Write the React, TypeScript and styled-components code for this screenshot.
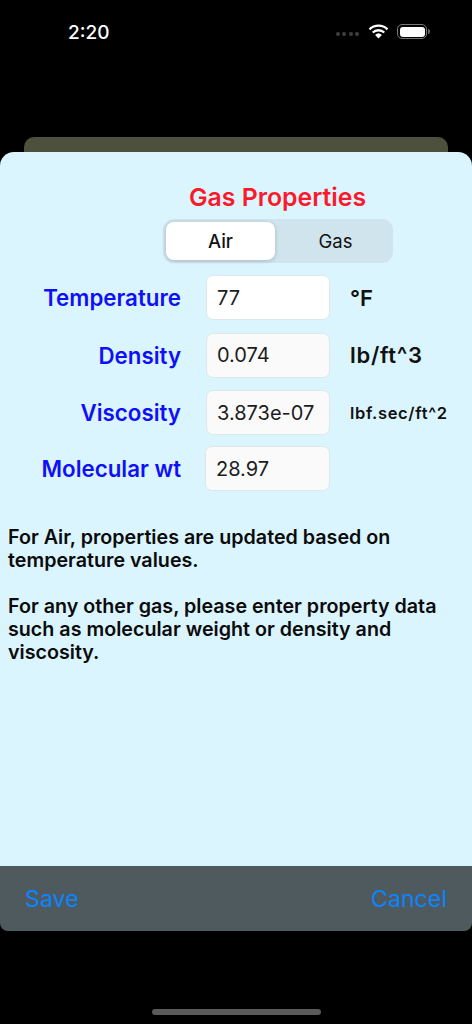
import React from "react";
import styled, { createGlobalStyle } from "styled-components";

const GlobalStyle = createGlobalStyle`
  html, body {
    margin: 0;
    padding: 0;
    background: #000;
  }
  body {
    font-family: Inter, "Liberation Sans", sans-serif;
  }
`;

const rows = [
  { label: "Temperature", value: "77", unit: "°F", active: true, size: 22 },
  { label: "Density", value: "0.074", unit: "lb/ft^3", size: 22, track: 0.7 },
  { label: "Viscosity", value: "3.873e-07", unit: "lbf.sec/ft^2", size: 16.5, track: 0.65 },
  { label: "Molecular wt", value: "28.97", wide: true },
];

const App = () => {
  return (
    <Screen>
      <GlobalStyle />
      <StatusBar>
        <Time>2:20</Time>
        <StatusIcons>
          <Dots>
            <i />
            <i />
            <i />
            <i />
          </Dots>
          <svg width="21" height="15" viewBox="0 0 21 15">
            <path
              d="M1.5 5.3 A13 13 0 0 1 19.5 5.3 M4.7 8.5 A8.6 8.6 0 0 1 16.3 8.5"
              fill="none"
              stroke="#fff"
              strokeWidth="2.3"
            />
            <path d="M7.1 10.9 A5 5 0 0 1 13.9 10.9 L10.5 14.6 Z" fill="#fff" />
          </svg>
          <Battery>
            <BatteryFill />
          </Battery>
        </StatusIcons>
      </StatusBar>
      <BackCard />
      <Sheet>
        <Title>Gas Properties</Title>
        <Segment>
          <SegmentOn>Air</SegmentOn>
          <SegmentOff>Gas</SegmentOff>
        </Segment>
        <Rows>
          {rows.map((row) => (
            <Row key={row.label}>
              <Label>{row.label}</Label>
              <Field $active={row.active} $wide={row.wide}>
                {row.value}
              </Field>
              {row.unit && (
                <Unit $size={row.size} $track={row.track}>
                  {row.unit}
                </Unit>
              )}
            </Row>
          ))}
        </Rows>
        <Note>
          For Air, properties are updated based on
          <br />
          temperature values.
          <br />
          <br />
          For any other gas, please enter property data
          <br />
          such as molecular weight or density and
          <br />
          viscosity.
        </Note>
      </Sheet>
      <Footer>
        <Action>Save</Action>
        <Action>Cancel</Action>
      </Footer>
      <HomeBar />
    </Screen>
  );
};

export default App;

const Screen = styled.div`
  width: 472px;
  height: 1024px;
  background: #000;
  display: flex;
  flex-direction: column;
  overflow: hidden;
`;

const StatusBar = styled.div`
  height: 137px;
  box-sizing: border-box;
  padding: 21px 45px 0 68px;
  display: flex;
  justify-content: space-between;
  align-items: flex-start;
`;

const Time = styled.div`
  color: #fff;
  font-size: 19px;
  font-weight: 500;
  line-height: 23px;
`;

const StatusIcons = styled.div`
  display: flex;
  align-items: center;
  gap: 8px;
  margin-top: 3px;
`;

const Dots = styled.div`
  display: flex;
  gap: 2.3px;
  margin: 5px 1px 0 0;

  i {
    width: 4px;
    height: 4px;
    border-radius: 50%;
    background: #3f3f3f;
  }
`;

const Battery = styled.div`
  position: relative;
  width: 30px;
  height: 15px;
  box-sizing: border-box;
  border: 1px solid #777;
  border-radius: 5px;
  padding: 1.5px;

  &::after {
    content: "";
    position: absolute;
    right: -4px;
    top: 4px;
    width: 2px;
    height: 5px;
    background: #666;
    border-radius: 0 2px 2px 0;
  }
`;

const BatteryFill = styled.div`
  height: 100%;
  background: #fff;
  border-radius: 3px;
`;

const BackCard = styled.div`
  height: 15px;
  margin: 0 24px;
  background: #4d503c;
  border-radius: 10px 10px 0 0;
`;

const Sheet = styled.div`
  height: 714px;
  box-sizing: border-box;
  background: #dbf5ff;
  border-radius: 14px 14px 0 0;
  padding-top: 31px;
  display: flex;
  flex-direction: column;
`;

const Title = styled.h1`
  margin: 0 0 8px 163px;
  width: 229px;
  text-align: center;
  color: #fb1a2c;
  font-size: 24.8px;
  font-weight: 600;
  line-height: 28px;
  white-space: nowrap;
`;

const Segment = styled.div`
  width: 230px;
  height: 44px;
  margin-left: 163px;
  box-sizing: border-box;
  padding: 3px;
  background: #d0e4ee;
  border-radius: 11px;
  display: flex;
`;

const SegmentOn = styled.div`
  width: 109px;
  background: #fff;
  border-radius: 8px;
  box-shadow: 0 1px 4px rgba(0, 0, 0, 0.2);
  display: flex;
  align-items: center;
  justify-content: center;
  font-size: 18.5px;
  font-weight: 500;
  color: #111;
`;

const SegmentOff = styled(SegmentOn)`
  flex: 1;
  padding-left: 6px;
  background: transparent;
  box-shadow: none;
  font-weight: 400;
`;

const Rows = styled.div`
  margin-top: 12px;
  display: flex;
  flex-direction: column;
  gap: 12.5px;
`;

const Row = styled.div`
  display: flex;
  align-items: center;
  height: 45px;

  &:last-child {
    margin-top: -1.5px;
  }
`;

const Label = styled.div`
  width: 181px;
  text-align: right;
  color: #1010f8;
  font-size: 22.3px;
  font-weight: 600;
  white-space: nowrap;
`;

const Field = styled.div<{ $active?: boolean; $wide?: boolean }>`
  box-sizing: border-box;
  width: ${(p) => (p.$wide ? "125px" : "124px")};
  height: 45px;
  margin-left: ${(p) => (p.$wide ? "24px" : "25px")};
  padding-left: 10px;
  display: flex;
  align-items: center;
  background: ${(p) => (p.$active ? "#fff" : "#fafafa")};
  border: 1px solid #dfe6ea;
  border-radius: 7px;
  font-size: 20px;
  color: #1c1c1e;
`;

const Unit = styled.div<{ $size?: number; $track?: number }>`
  margin-left: 20px;
  color: #111;
  font-weight: 600;
  font-size: ${(p) => p.$size}px;
  letter-spacing: ${(p) => p.$track ?? 0}px;
  white-space: nowrap;
`;

const Note = styled.p`
  margin: 35px 0 0 8px;
  color: #0b0b0b;
  font-size: 19.7px;
  font-weight: 600;
  line-height: 23px;
  white-space: nowrap;
`;

const Footer = styled.div`
  height: 65px;
  box-sizing: border-box;
  background: #4f5a5e;
  border-radius: 0 0 8px 8px;
  padding: 0 25px;
  display: flex;
  justify-content: space-between;
  align-items: center;
`;

const Action = styled.div`
  color: #0a84ff;
  font-size: 23.2px;
  font-weight: 400;
`;

const HomeBar = styled.div`
  width: 169px;
  height: 6px;
  margin: 78px auto 0;
  border-radius: 3px;
  background: #5a5a5a;
`;
